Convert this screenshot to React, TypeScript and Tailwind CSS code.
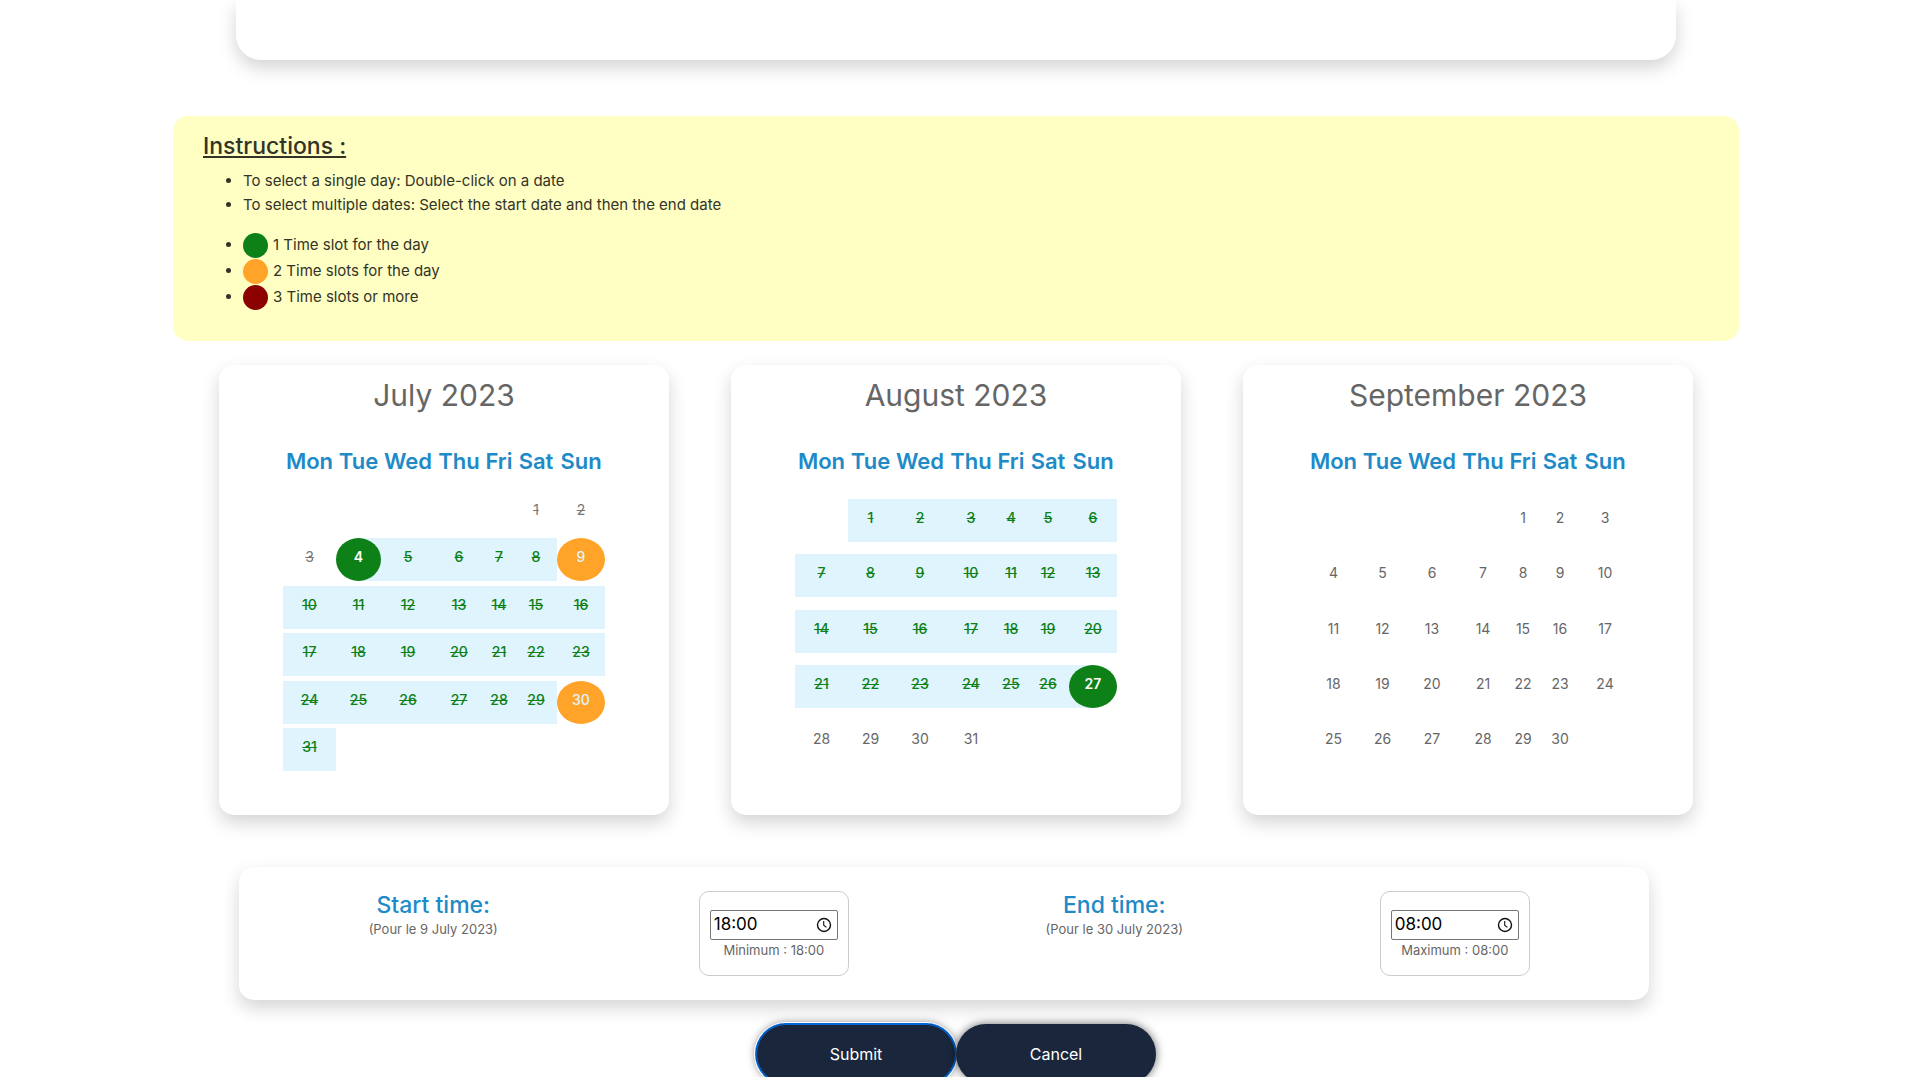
import { useState } from 'react';

type Kind = 'plain' | 'past' | 'range' | 'rangeStart' | 'rangeEnd' | 'double';

interface Month {
  name: string;
  offset: number;
  days: number;
  kindOf: (day: number) => Kind;
  compact: boolean;
}

const WEEKDAYS = ['Mon', 'Tue', 'Wed', 'Thu', 'Fri', 'Sat', 'Sun'];

const MONTHS: Month[] = [
  {
    name: 'July 2023',
    offset: 5,
    days: 31,
    compact: true,
    kindOf: (d) => (d < 4 ? 'past' : d === 4 ? 'rangeStart' : d === 9 || d === 30 ? 'double' : 'range'),
  },
  {
    name: 'August 2023',
    offset: 1,
    days: 31,
    compact: false,
    kindOf: (d) => (d < 27 ? 'range' : d === 27 ? 'rangeEnd' : 'plain'),
  },
  { name: 'September 2023', offset: 4, days: 30, compact: false, kindOf: () => 'plain' },
];

const CELL: Record<Kind, string> = {
  plain: '',
  past: '',
  range: 'bg-[#e0f4fe]',
  rangeStart: 'bg-linear-to-r from-transparent from-50% to-[#e0f4fe] to-50%',
  rangeEnd: 'bg-linear-to-l from-transparent from-50% to-[#e0f4fe] to-50%',
  double: '',
};

const DAY: Record<Kind, string> = {
  plain: 'text-[#666]',
  past: 'text-[#777] line-through',
  range: 'text-[#0d8018] font-medium line-through',
  rangeStart: 'rounded-[50%] bg-[#0d8018] text-white font-semibold',
  rangeEnd: 'rounded-[50%] bg-[#0d8018] text-white font-semibold',
  double: 'rounded-[50%] bg-[#ffa329] text-[#e0f4fe] font-medium',
};

const CARD = 'bg-white shadow-[0_8px_18px_rgba(0,0,0,0.17)]';

function Calendar({ month }: { month: Month }) {
  const cells: (number | null)[] = [
    ...Array.from({ length: month.offset }, () => null),
    ...Array.from({ length: month.days }, (_, i) => i + 1),
  ];
  while (cells.length % 7) cells.push(null);
  const weeks = Array.from({ length: cells.length / 7 }, (_, i) => cells.slice(i * 7, i * 7 + 7));

  return (
    <section className={`${CARD} flex min-h-[450px] flex-col items-center rounded-[15px] pt-3`}>
      <h2 className="text-[30px] leading-9 text-[#666]">{month.name}</h2>
      <table className="mt-8 w-[322px] table-fixed border-collapse text-center">
        <colgroup>
          <col className="w-[53px]" />
          <col className="w-[45px]" />
          <col className="w-[54px]" />
          <col className="w-[48px]" />
          <col className="w-[32px]" />
          <col className="w-[42px]" />
          <col className="w-[48px]" />
        </colgroup>
        <thead>
          <tr className={month.compact ? 'h-[43px]' : 'h-12'}>
            {WEEKDAYS.map((d) => (
              <th key={d} scope="col" className="p-0 align-top text-[22px] leading-8 font-semibold text-[#1e8ac7]">
                {d}
              </th>
            ))}
          </tr>
        </thead>
        <tbody>
          {weeks.map((week, i) => (
            <tr
              key={i}
              className={month.compact ? 'odd:h-12 even:h-[47px]' : 'h-[55px] nth-3:h-14'}
            >
              {week.map((day, j) => {
                if (day === null) return <td key={j} className="p-0" />;
                const kind = month.kindOf(day);
                return (
                  <td key={j} className="p-0 align-middle">
                    <div className={CELL[kind]}>
                      <button type="button" className={`block h-[43px] w-full pb-[5px] text-sm ${DAY[kind]}`}>
                        {day}
                      </button>
                    </div>
                  </td>
                );
              })}
            </tr>
          ))}
        </tbody>
      </table>
    </section>
  );
}

function ClockIcon() {
  return (
    <svg viewBox="0 0 16 16" className="size-4 shrink-0" fill="none" stroke="#111" strokeWidth="1.4" aria-hidden="true">
      <circle cx="8" cy="8" r="6.5" />
      <path d="M7.7 4V8.2L10.4 10.4" strokeWidth="1.1" />
    </svg>
  );
}

interface TimeFieldProps {
  id: string;
  label: string;
  date: string;
  initial: string;
  hint: string;
}

function TimeField({ id, label, date, initial, hint }: TimeFieldProps) {
  const [value, setValue] = useState(initial);
  return (
    <>
      <div className="text-center">
        <label htmlFor={id} className="block text-[23px] leading-7 font-medium text-[#1e8ac7]">
          {label}
        </label>
        <p className="text-[13px] leading-5 text-[#666]">{date}</p>
      </div>
      <div className="mx-auto h-[85px] w-[150px] rounded-[10px] border border-[#ccc] px-[10px] pt-[18px] text-center">
        <div className="flex h-[30px] items-center rounded-[2px] border border-[#767676] pr-[5px] pl-[3px]">
          <input
            id={id}
            type="text"
            inputMode="numeric"
            value={value}
            onChange={(e) => setValue(e.target.value)}
            className="w-full min-w-0 text-[17px] text-black outline-none"
          />
          <ClockIcon />
        </div>
        <p className="text-[13px] leading-5 text-[#666]">{hint}</p>
      </div>
    </>
  );
}

const SLOTS = [
  { color: 'bg-[#0d8018]', text: '1 Time slot for the day' },
  { color: 'bg-[#ffa329]', text: '2 Time slots for the day' },
  { color: 'bg-[#8b0000]', text: '3 Time slots or more' },
];

export default function App() {
  return (
    <main className="bg-white pr-1 font-[Inter,sans-serif]">
      <div className={`${CARD} mx-auto h-[60px] max-w-[1440px] rounded-b-[25px]`} />

      <div className="mx-auto mt-14 max-w-[1566px]">
        <section className="rounded-[15px] bg-[#ffffc3] px-[30px] pt-3 pb-[31px] text-[#333328]">
          <h2 className="text-[23px] leading-9 font-medium underline decoration-2 underline-offset-2">Instructions :</h2>
          <ul className="mt-[5px] list-disc pl-10 text-[15px] leading-6">
            <li>To select a single day: Double-click on a date</li>
            <li>To select multiple dates: Select the start date and then the end date</li>
          </ul>
          <ul className="mt-[15px] list-disc pl-10 text-[15px] leading-[26px]">
            {SLOTS.map((s) => (
              <li key={s.text} className="h-[26px]">
                <span className={`mr-[5px] inline-block size-[25px] rounded-full align-middle ${s.color}`} />
                {s.text}
              </li>
            ))}
          </ul>
        </section>

        <div className="mx-auto mt-6 grid max-w-[1474px] grid-cols-3 gap-[62px]">
          {MONTHS.map((m) => (
            <Calendar key={m.name} month={m} />
          ))}
        </div>

        <form onSubmit={(e) => e.preventDefault()}>
          <div className={`${CARD} mt-[52px] mr-[90px] ml-[66px] grid grid-cols-4 rounded-[15px] p-6`}>
            <TimeField id="start" label="Start time:" date="(Pour le 9 July 2023)" initial="18:00" hint="Minimum : 18:00" />
            <TimeField id="end" label="End time:" date="(Pour le 30 July 2023)" initial="08:00" hint="Maximum : 08:00" />
          </div>
          <div className="mt-6 flex justify-center text-base text-white">
            <button
              type="submit"
              className="h-[60px] w-[200px] rounded-[30px] bg-[#19263c] shadow-[inset_0_0_0_1px_#0067d9,0_0_0_1px_#0067d9,0_0_0_2px_#fff,0_0_10px_rgba(0,0,0,0.6)]"
            >
              Submit
            </button>
            <button type="button" className="h-[60px] w-[200px] rounded-[30px] bg-[#19263c] shadow-[0_0_10px_rgba(0,0,0,0.6)]">
              Cancel
            </button>
          </div>
        </form>
      </div>
    </main>
  );
}
